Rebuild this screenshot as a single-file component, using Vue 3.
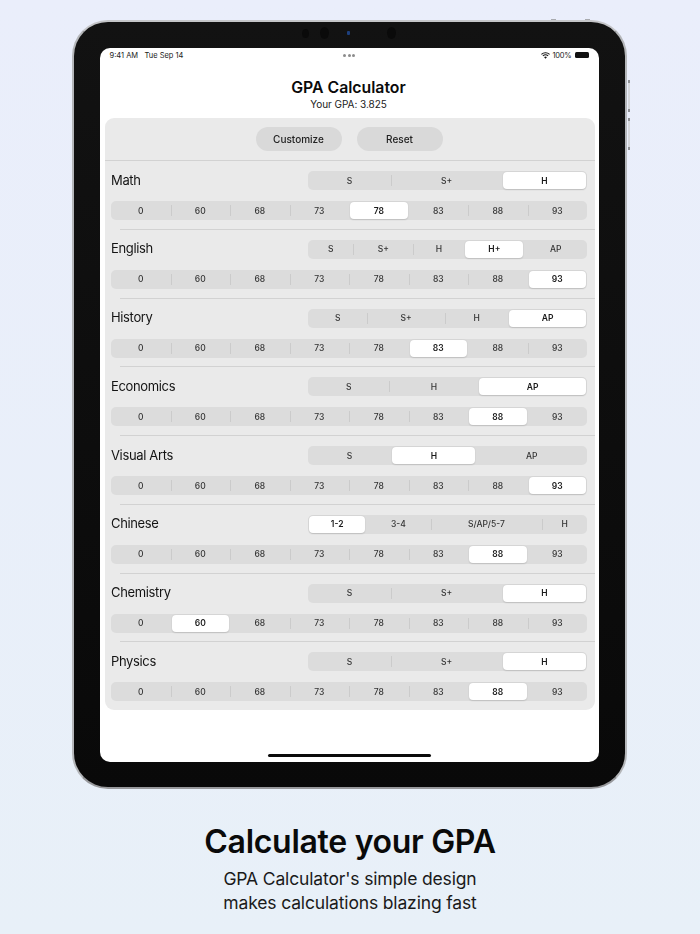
<template>
  <div class="page">
    <div class="device">
      <!-- hardware bits around the frame -->
      <span class="nub nub-top first"></span>
      <span class="nub nub-top second"></span>
      <span class="nub nub-side upper"></span>
      <span class="nub nub-side lower"></span>
      <div class="cameras">
        <span class="cam small"></span>
        <span class="cam"></span>
        <span class="led"></span>
        <span class="cam"></span>
      </div>

      <div class="screen">
        <div class="status">
          <span class="status-left">9:41 AM&nbsp;&nbsp; Tue Sep 14</span>
          <span class="dots"><i></i><i></i><i></i></span>
          <span class="status-right">
            <svg width="9" height="7" viewBox="0 0 20 15">
              <path d="M10 14.5 6.9 11.2a4.6 4.6 0 0 1 6.2 0z" fill="#111" />
              <path d="M4.9 9.1a7.6 7.6 0 0 1 10.2 0l1.5-1.6a9.8 9.8 0 0 0-13.2 0z" fill="#111" />
              <path d="M1.7 5.7a12.2 12.2 0 0 1 16.6 0l1.5-1.6a14.5 14.5 0 0 0-19.600 0z" fill="#111" />
            </svg>
            <span class="percent">100%</span>
            <span class="battery"></span>
          </span>
        </div>

        <header class="head">
          <h1>GPA Calculator</h1>
          <p>Your GPA: 3.825</p>
        </header>

        <section class="card">
          <div class="toolbar">
            <button class="pill">Customize</button>
            <button class="pill">Reset</button>
          </div>

          <div v-for="(course, i) in courses" :key="course.name" class="course" :class="{ last: i === courses.length - 1 }">
            <div class="course-top">
              <span class="course-name">{{ course.name }}</span>
              <div class="track levels">
                <div
                  v-for="(lv, j) in course.levels"
                  :key="lv.label"
                  class="seg"
                  :class="{ sep: showSep(j, course.level), on: j === course.level }"
                  :style="{ flexGrow: lv.w }"
                >
                  <span>{{ lv.label }}</span>
                </div>
              </div>
            </div>
            <div class="track">
              <div
                v-for="(g, j) in grades"
                :key="g"
                class="seg"
                :class="{ sep: showSep(j, course.grade), on: j === course.grade }"
              >
                <span>{{ g }}</span>
              </div>
            </div>
          </div>
        </section>

        <div class="home"></div>
      </div>
    </div>

    <footer class="caption">
      <h2>Calculate your GPA</h2>
      <p>GPA Calculator's simple design<br />makes calculations blazing fast</p>
    </footer>
  </div>
</template>

<script setup>
const grades = [0, 60, 68, 73, 78, 83, 88, 93]

const regular = [
  { label: 'S', w: 83 },
  { label: 'S+', w: 111 },
  { label: 'H', w: 85 },
]

const courses = [
  { name: 'Math', levels: regular, level: 2, grade: 4 },
  {
    name: 'English',
    levels: [
      { label: 'S', w: 45 },
      { label: 'S+', w: 60 },
      { label: 'H', w: 51 },
      { label: 'H+', w: 60 },
      { label: 'AP', w: 63 },
    ],
    level: 3,
    grade: 7,
  },
  {
    name: 'History',
    levels: [
      { label: 'S', w: 59 },
      { label: 'S+', w: 78 },
      { label: 'H', w: 63 },
      { label: 'AP', w: 79 },
    ],
    level: 3,
    grade: 5,
  },
  {
    name: 'Economics',
    levels: [
      { label: 'S', w: 81 },
      { label: 'H', w: 89 },
      { label: 'AP', w: 109 },
    ],
    level: 2,
    grade: 6,
  },
  {
    name: 'Visual Arts',
    levels: [
      { label: 'S', w: 83 },
      { label: 'H', w: 85 },
      { label: 'AP', w: 111 },
    ],
    level: 1,
    grade: 7,
  },
  {
    name: 'Chinese',
    levels: [
      { label: '1-2', w: 58 },
      { label: '3-4', w: 64 },
      { label: 'S/AP/5-7', w: 113 },
      { label: 'H', w: 44 },
    ],
    level: 0,
    grade: 6,
  },
  { name: 'Chemistry', levels: regular, level: 2, grade: 1 },
  { name: 'Physics', levels: regular, level: 2, grade: 6 },
]

// no divider on the first segment or on either side of the selected one
function showSep(index, selected) {
  return index > 0 && index !== selected && index !== selected + 1
}
</script>

<style scoped>
.page {
  width: 700px;
  height: 934px;
  overflow: hidden;
  display: flex;
  flex-direction: column;
  align-items: center;
  background: linear-gradient(180deg, #eaeefb 0%, #e8f0f8 100%);
  font-family: Inter, "Liberation Sans", sans-serif;
  color: #111;
}

.device {
  position: relative;
  box-sizing: border-box;
  width: 555px;
  height: 769px;
  margin-top: 20px;
  margin-left: -1px;
  padding: 25.5px;
  border: 2.5px solid #b4b6b9;
  border-top-color: #c4c5c8;
  border-bottom-color: #98999c;
  border-radius: 36px;
  background: linear-gradient(180deg, #121212 0%, #090909 100%);
}

.nub {
  position: absolute;
  background: #a9abaf;
}

.nub-top {
  top: -3.5px;
  width: 5px;
  height: 1px;
}

.nub-top.first {
  left: 477px;
}

.nub-top.second {
  left: 511px;
}

.nub-side {
  right: -4.5px;
  width: 2px;
  height: 32px;
  background: linear-gradient(180deg, #8d8f93 0 3px, #d5d7dc 3px calc(100% - 3px), #8d8f93 calc(100% - 3px));
}

.nub-side.upper {
  top: 58px;
}

.nub-side.lower {
  top: 96px;
}

.cameras {
  position: absolute;
  top: 5px;
  left: 228px;
  width: 100px;
  height: 12px;
  display: flex;
  align-items: center;
}

.cam {
  width: 12px;
  height: 12px;
  border-radius: 50%;
  background: #0a0a0a;
  margin-right: 6px;
}

.cam.small {
  width: 9px;
  height: 9px;
  margin-right: 11px;
}

.led {
  width: 3px;
  height: 4px;
  margin: 0 37px 0 12px;
  background: #1d3f7c;
  border-radius: 1px;
}

.screen {
  box-sizing: border-box;
  width: 499px;
  height: 714px;
  display: flex;
  flex-direction: column;
  padding: 0 4px 5px 5px;
  border-radius: 10px;
  background: #fff;
}

.status {
  display: grid;
  grid-template-columns: 1fr auto 1fr;
  align-items: center;
  height: 15px;
  padding: 0 6px 0 5px;
  font-size: 7.5px;
  color: #222;
}

.dots {
  display: flex;
  gap: 1.5px;
}

.dots i {
  width: 3px;
  height: 3px;
  border-radius: 50%;
  background: #8c8c8c;
}

.status-right {
  display: flex;
  justify-content: flex-end;
  align-items: center;
  gap: 2px;
}

.percent {
  letter-spacing: -0.2px;
}

.battery {
  display: block;
  width: 14px;
  height: 6px;
  margin-left: 1px;
  border-radius: 1.5px;
  background: #111;
}

.head {
  height: 55px;
  padding: 16px 2px 0 0;
  box-sizing: border-box;
  text-align: center;
}

.head h1 {
  margin: 0;
  font-size: 15.8px;
  line-height: 18px;
  font-weight: 600;
  color: #0a0a0a;
}

.head p {
  margin: 0;
  font-size: 10px;
  line-height: 14px;
  letter-spacing: -0.05px;
  color: #222;
}

.card {
  border-radius: 9px;
  background: #eaeaea;
  will-change: transform; /* own layer, keeps the small labels free of colour fringes */
}

.toolbar {
  display: flex;
  justify-content: center;
  gap: 15px;
  height: 33px;
  padding: 9px 2px 0 0;
  border-bottom: 1px solid #d2d2d2;
}

.pill {
  width: 86px;
  height: 24px;
  padding: 0;
  border: none;
  border-radius: 12px;
  background: #d9d9d9;
  font-family: inherit;
  font-size: 10px;
  font-weight: 500;
  color: #222;
}

.course {
  padding: 10px 8px 9.75px 6px;
  background: linear-gradient(#d2d2d2, #d2d2d2) 15px 100% / 100% 1px no-repeat;
}

.course.last {
  padding-bottom: 9px;
  background: none;
}

.course-top {
  display: flex;
  align-items: center;
  justify-content: space-between;
  margin-bottom: 11px;
}

.course-name {
  padding-bottom: 2px;
  font-size: 13px;
  letter-spacing: -0.35px;
  color: #141414;
}

.track {
  display: flex;
  height: 19px;
  border-radius: 5px;
  background: #dcdcdc;
}

.levels {
  width: 279px;
}

.seg {
  flex: 1 0 0;
  min-width: 0;
  box-sizing: border-box;
  padding: 1px;
  font-size: 8.5px;
  font-weight: 500;
  color: #333;
}

.seg.sep {
  background: linear-gradient(#cbcbcb, #cbcbcb) left center / 1px 11px no-repeat;
}

.seg span {
  display: flex;
  align-items: center;
  justify-content: center;
  height: 100%;
  border-radius: 4px;
}

.seg.on span {
  background: #fff;
  box-shadow: 0 0.5px 1.5px rgba(0, 0, 0, 0.14);
  font-weight: 600;
  color: #1a1a1a;
}

.home {
  width: 163px;
  height: 3px;
  margin: auto 0 0 163px;
  border-radius: 2px;
  background: #0a0a0a;
}

.caption {
  margin-top: 33px;
  text-align: center;
}

.caption h2 {
  margin: 0;
  font-size: 32px;
  line-height: 40px;
  font-weight: 600;
  letter-spacing: -0.3px;
  color: #0a0a0a;
}

.caption p {
  margin: 5px 0 0;
  font-size: 17.5px;
  line-height: 24px;
  letter-spacing: -0.15px;
  color: #1a1a1a;
}
</style>
